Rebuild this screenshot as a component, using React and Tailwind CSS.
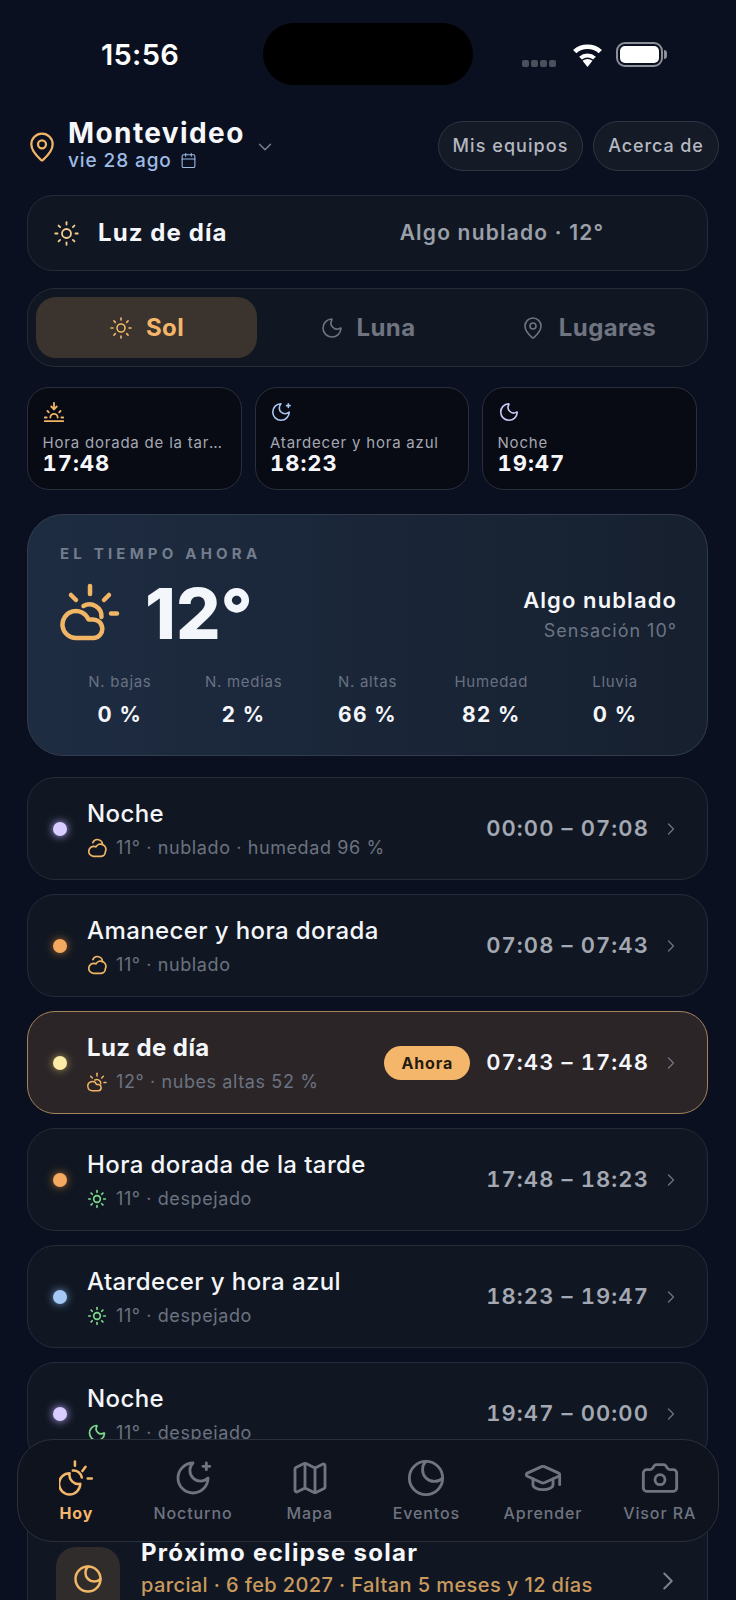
import React from 'react';
import { MapPin, ChevronDown, ChevronRight, Calendar, Sun, Moon, Map, GraduationCap, Camera } from 'lucide-react';

function SunsetIcon({ className }) {
  return (
    <svg viewBox="0 0 24 24" fill="none" stroke="currentColor" strokeWidth="2" strokeLinecap="round" strokeLinejoin="round" className={className}>
      <path d="M12 2v7" />
      <path d="m15 6-3 3-3-3" />
      <path d="m4.9 10.9 1.4 1.4" />
      <path d="M2 18h2" />
      <path d="M20 18h2" />
      <path d="m19.1 10.9-1.4 1.4" />
      <path d="M16 18a4 4 0 0 0-8 0" />
      <path d="M2 22h20" />
    </svg>
  );
}

function MoonStar({ className, strokeWidth = 2 }) {
  return (
    <svg viewBox="0 0 24 24" fill="none" stroke="currentColor" strokeWidth={strokeWidth} strokeLinecap="round" strokeLinejoin="round" className={className}>
      <path d="M12 3a6 6 0 0 0 9 9 9 9 0 1 1-9-9Z" />
      <path d="M20 3v4" />
      <path d="M22 5h-4" />
    </svg>
  );
}

function CloudSun({ className, strokeWidth = 4.5 }) {
  return (
    <svg viewBox="10 8 60 58" fill="none" stroke="currentColor" strokeWidth={strokeWidth} strokeLinecap="round" strokeLinejoin="round" className={className}>
      <path d="M40 11v8" />
      <path d="m21 20 5 5" />
      <path d="m59 20-5 5" />
      <path d="M61 38.5h6" />
      <path d="M33.5 31A12 12 0 0 1 51.5 42" />
      <path d="M44 63H26a13.5 13.5 0 1 1 12.5-18.5h3.5a9.2 9.2 0 0 1 2 18.5Z" />
    </svg>
  );
}

function CloudArc({ className }) {
  return (
    <svg viewBox="0 0 24 24" fill="none" stroke="currentColor" strokeWidth="2" strokeLinecap="round" strokeLinejoin="round" className={className}>
      <path d="M7 5.5A6 6 0 0 1 18.5 8" />
      <path d="M17 22H8a6 6 0 1 1 2-11.7 5 5 0 0 1 .8.4A5.5 5.5 0 0 1 22 16.5 5.5 5.5 0 0 1 17 22Z" />
    </svg>
  );
}

function Eclipse({ className, strokeWidth = 2 }) {
  return (
    <svg viewBox="0 0 24 24" fill="none" stroke="currentColor" strokeWidth={strokeWidth} strokeLinecap="round" strokeLinejoin="round" className={className}>
      <circle cx="12" cy="12" r="10" />
      <path d="M12 2a7 7 0 1 0 10 10" />
    </svg>
  );
}

function HoyIcon({ className }) {
  return (
    <svg viewBox="0 0 32 33" fill="none" stroke="currentColor" strokeWidth="2.4" strokeLinecap="round" strokeLinejoin="round" className={className}>
      <path d="M15 1v4" />
      <path d="m25 6-3 4" />
      <path d="M27 17h4" />
      <path d="M13 9.5A8 8 0 0 1 21.5 16" />
      <path d="M10 12a10 10 0 1 0 10 10 8.5 8.5 0 0 1-10-10Z" />
    </svg>
  );
}

const rows = [
  { title: 'Noche', dot: 'bg-[#d9ccff] shadow-[0_0_8px_#b9a8ff]', Icon: CloudArc, iconColor: 'text-[#f1b566]', sub: '11° · nublado · humedad 96 %', time: '00:00 – 07:08' },
  { title: 'Amanecer y hora dorada', dot: 'bg-[#f5a860] shadow-[0_0_8px_#a8672f]', Icon: CloudArc, iconColor: 'text-[#f1b566]', sub: '11° · nublado', time: '07:08 – 07:43' },
  { title: 'Luz de día', dot: 'bg-[#fdeca6] shadow-[0_0_8px_#a89a50]', Icon: CloudSun, iconColor: 'text-[#f1b566]', sub: '12° · nubes altas 52 %', time: '07:43 – 17:48', now: true },
  { title: 'Hora dorada de la tarde', dot: 'bg-[#f5a860] shadow-[0_0_8px_#a8672f]', Icon: Sun, iconColor: 'text-[#7ddc8c]', sub: '11° · despejado', time: '17:48 – 18:23' },
  { title: 'Atardecer y hora azul', dot: 'bg-[#a6c8f5] shadow-[0_0_8px_#6c93c8]', Icon: Sun, iconColor: 'text-[#7ddc8c]', sub: '11° · despejado', time: '18:23 – 19:47' },
  { title: 'Noche', dot: 'bg-[#d9ccff] shadow-[0_0_8px_#b9a8ff]', Icon: Moon, iconColor: 'text-[#7ddc8c]', sub: '11° · despejado', time: '19:47 – 00:00' },
];

const stats = [
  ['N. bajas', '0 %'],
  ['N. medias', '2 %'],
  ['N. altas', '66 %'],
  ['Humedad', '82 %'],
  ['Lluvia', '0 %'],
];

const tiles = [
  { Icon: SunsetIcon, color: 'text-[#f1b566]', label: 'Hora dorada de la tarde', time: '17:48' },
  { Icon: MoonStar, color: 'text-[#a9c7f0]', label: 'Atardecer y hora azul', time: '18:23' },
  { Icon: Moon, color: 'text-[#cfc8f5]', label: 'Noche', time: '19:47' },
];

const nav = [
  { label: 'Hoy', Icon: HoyIcon, active: true, size: 'w-[34px] h-[36px] my-[2px]' },
  { label: 'Nocturno', Icon: MoonStar, size: 'w-[40px] h-[40px]' },
  { label: 'Mapa', Icon: Map, size: 'w-[40px] h-[40px]' },
  { label: 'Eventos', Icon: Eclipse, size: 'w-[40px] h-[40px]' },
  { label: 'Aprender', Icon: GraduationCap, size: 'w-[40px] h-[40px]' },
  { label: 'Visor RA', Icon: Camera, size: 'w-[40px] h-[40px]' },
];

function Row({ title, dot, Icon, iconColor, sub, time, now }) {
  return (
    <div className={`h-[103px] rounded-[28px] border flex items-center pl-[25px] pr-[26px] ${now ? 'bg-[#2b2528] border-[#a5835c]' : 'bg-[#111722] border-[#252b38]'}`}>
      <span className={`w-[14px] h-[14px] rounded-full shrink-0 ${dot}`} />
      <div className="ml-[20px] pt-[2px] flex-1 min-w-0">
        <div className={`text-[24px] leading-[32px] text-[#f4f6fa] tracking-[0.4px] ${now ? 'font-bold' : 'font-medium'}`}>{title}</div>
        <div className="mt-[5px] flex items-center gap-[9px] text-[18px] leading-[26px] text-[#6b7280] tracking-[0.6px]">
          <Icon className={`w-[20px] h-[20px] ${iconColor}`} />
          {sub}
        </div>
      </div>
      {now && <span className="mr-[16px] h-[34px] px-[17px] flex items-center rounded-full bg-[#f3b66a] text-[#241a10] text-[16px] font-bold tracking-[0.9px]">Ahora</span>}
      <span className={`text-[22px] font-semibold tracking-[1.1px] tabular-nums ${now ? 'text-[#f4f6fa]' : 'text-[#a3a8b2]'}`}>{time}</span>
      <ChevronRight className="ml-[12px] w-[20px] h-[20px] text-[#6f7580]" strokeWidth={1.5} />
    </div>
  );
}

export default function App() {
  return (
    <div className="relative w-[736px] h-[1600px] overflow-hidden bg-[#0a1020]" style={{ fontFamily: 'Inter, sans-serif' }}>
      {/* status bar */}
      <div className="relative h-[116px]">
        <span className="absolute left-[101px] top-[36px] text-[29px] leading-[38px] font-semibold tracking-[0.3px] text-white">15:56</span>
        <div className="absolute left-[263px] top-[23px] w-[210px] h-[62px] rounded-full bg-black" />
        <div className="absolute left-[522px] top-[60px] flex gap-[2px]">
          <span className="w-[7px] h-[7px] rounded-[2px] bg-[#4b505c]" />
          <span className="w-[7px] h-[7px] rounded-[2px] bg-[#4b505c]" />
          <span className="w-[7px] h-[7px] rounded-[2px] bg-[#4b505c]" />
          <span className="w-[7px] h-[7px] rounded-[2px] bg-[#4b505c]" />
        </div>
        <svg viewBox="0 0 24 18" className="absolute left-[571px] top-[42px] w-[33px] h-[25px]" fill="white">
          <path d="M12 18l3.6-4.4a5.6 5.6 0 0 0-7.2 0L12 18zM5.9 10.6l2.1 2a6.4 6.4 0 0 1 8 0l2.1-2a9.4 9.4 0 0 0-12.2 0zM1.5 5.7l2.4 2.4a12.4 12.4 0 0 1 16.2 0l2.4-2.4a15.8 15.8 0 0 0-21 0z" />
        </svg>
        <div className="absolute left-[616px] top-[42px] w-[47px] h-[25px] rounded-[9px] border-2 border-[#8b8f98] p-[2px]">
          <div className="w-full h-full rounded-[5px] bg-white" />
        </div>
        <div className="absolute left-[664px] top-[50px] w-[3px] h-[9px] rounded-r-full bg-[#8b8f98]" />
      </div>

      {/* header */}
      <div className="flex items-center h-[61px] pl-[26px]">
        <MapPin className="w-[32px] h-[32px] text-[#f1b566]" strokeWidth={1.7} />
        <div className="ml-[10px] -mt-[6px]">
          <div className="text-[28px] leading-[34px] font-bold tracking-[1.4px] text-[#f6f7fa]">Montevideo</div>
          <div className="flex items-center gap-[8px] text-[19px] leading-[22px] font-medium tracking-[0.9px] text-[#9dbbe5]">
            vie 28 ago
            <Calendar className="w-[17px] h-[17px]" strokeWidth={1.5} />
          </div>
        </div>
        <ChevronDown className="ml-[9px] w-[22px] h-[22px] text-[#7d8491]" strokeWidth={1.5} />
        <div className="ml-auto -mt-[2px] flex gap-[10px] pr-[17px]">
          <span className="h-[50px] w-[145px] flex items-center justify-center rounded-full border border-[#2f3542] bg-[#141a26] text-[18px] font-medium tracking-[1.05px] text-[#b4b8c0]">Mis equipos</span>
          <span className="h-[50px] w-[126px] flex items-center justify-center rounded-full border border-[#2f3542] bg-[#141a26] text-[18px] font-medium tracking-[0.9px] text-[#b4b8c0]">Acerca de</span>
        </div>
      </div>

      <div className="px-[27px] mt-[18px] w-[735px]">
        {/* current phase */}
        <div className="h-[76px] rounded-[26px] border border-[#252b38] bg-[#111722] flex items-center pl-[25px]">
          <Sun className="w-[27px] h-[27px] text-[#f4cd8c]" strokeWidth={1.6} />
          <span className="ml-[18px] text-[24px] font-bold text-[#f4f6fa] tracking-[1.1px]">Luz de día</span>
          <span className="ml-[172px] text-[21px] font-semibold tracking-[1.2px] text-[#9a9fa9]">Algo nublado · 12°</span>
        </div>

        {/* tabs */}
        <div className="mt-[17px] h-[79px] rounded-[28px] border border-[#252b38] bg-[#111722] p-[8px] flex">
          <div className="flex-1 rounded-[20px] bg-[#3a332e] flex items-center justify-center gap-[13px] text-[#f3b66a] text-[24px] font-bold tracking-[0.4px]">
            <Sun className="w-[24px] h-[24px]" strokeWidth={1.6} />
            Sol
          </div>
          <div className="flex-1 flex items-center justify-center gap-[13px] text-[#6f7480] text-[24px] font-bold tracking-[0.4px]">
            <Moon className="w-[24px] h-[24px]" strokeWidth={1.6} />
            Luna
          </div>
          <div className="flex-1 flex items-center justify-center gap-[14px] text-[#6f7480] text-[24px] font-bold tracking-[0.4px]">
            <MapPin className="w-[24px] h-[24px]" strokeWidth={1.6} />
            Lugares
          </div>
        </div>

        {/* upcoming */}
        <div className="mt-[20px] flex gap-[13px]">
          {tiles.map((t) => (
            <div key={t.time} className="w-[214.5px] h-[103px] rounded-[22px] border border-[#2a2f3b] bg-[#080a14] pl-[14.5px] pr-[18px] pt-[13px]">
              <t.Icon className={`w-[22px] h-[22px] ${t.color}`} strokeWidth={1.75} />
              <div className="mt-[11px] text-[15px] leading-[18px] tracking-[0.8px] text-[#a3a8b2] truncate">{t.label}</div>
              <div className="text-[22px] leading-[22px] font-bold tracking-[1px] tabular-nums text-[#f6f7fa]">{t.time}</div>
            </div>
          ))}
        </div>

        {/* weather */}
        <div className="mt-[24px] h-[242px] rounded-[36px] border border-[#333c4c] bg-gradient-to-r from-[#1e2c42] via-[#1a2638] to-[#16202f] pl-[32px] pr-[30px] pt-[30px]">
          <div className="text-[15px] leading-[18px] font-bold tracking-[4.2px] text-[#747d8c]">EL TIEMPO AHORA</div>
          <div className="mt-[15px] flex items-center h-[72px]">
            <CloudSun className="w-[60px] h-[58px] -mt-[4px] text-[#f1b566]" />
            <span className="ml-[25px] text-[70px] leading-[70px] font-extrabold text-[#f3f6fb]">12°</span>
            <div className="ml-auto text-right">
              <div className="text-[22px] leading-[32px] font-semibold tracking-[1.1px] text-[#f4f6fa]">Algo nublado</div>
              <div className="mt-[1px] text-[18px] leading-[28px] tracking-[1px] text-[#6b7585]">Sensación 10°</div>
            </div>
          </div>
          <div className="mt-[22px] grid grid-cols-5 text-center -ml-[2px]">
            {stats.map(([label, value]) => (
              <div key={label}>
                <div className="text-[15px] leading-[20px] tracking-[0.7px] text-[#687182]">{label}</div>
                <div className="mt-[10px] text-[21px] leading-[26px] font-bold tracking-[1.4px] text-[#f4f6fa]">{value}</div>
              </div>
            ))}
          </div>
        </div>

        {/* timeline */}
        <div className="mt-[21px] flex flex-col gap-[14px]">
          {rows.map((r) => <Row key={r.time} {...r} />)}
          <div className="mt-[10px] h-[150px] rounded-[28px] border border-[#252b38] bg-[#111722] pt-[48px] pl-[28px] pr-[24px] flex gap-[21px]">
            <div className="mt-[9px] w-[64px] h-[80px] rounded-[20px] bg-[#2f2c2b] flex items-start justify-center pt-[17px]">
              <Eclipse className="w-[30px] h-[30px] text-[#f1b566]" />
            </div>
            <div className="flex-1">
              <div className="text-[24px] leading-[30px] font-bold text-[#f6f7fa] tracking-[1.3px]">Próximo eclipse solar</div>
              <div className="mt-[2px] text-[20px] leading-[30px] font-medium tracking-[0.4px] text-[#c99a5e]">parcial · 6 feb 2027 · Faltan 5 meses y 12 días</div>
            </div>
            <ChevronRight className="mt-[28px] w-[30px] h-[30px] text-[#7d8491]" strokeWidth={1.5} />
          </div>
        </div>
      </div>

      {/* floating nav */}
      <div className="absolute left-[17px] top-[1439px] w-[702px] h-[103px] rounded-[36px] border border-[#2a303c] bg-[#0e131e] flex items-center">
        {nav.map((n) => (
          <div key={n.label} className={`flex-1 flex flex-col items-center ${n.active ? 'text-[#f3b66a]' : 'text-[#6f7480]'}`}>
            <n.Icon className={n.size} strokeWidth={1.7} />
            <span className={`mt-[5px] text-[16px] leading-[20px] tracking-[0.9px] ${n.active ? 'font-bold' : 'font-medium'}`}>{n.label}</span>
          </div>
        ))}
      </div>
    </div>
  );
}
